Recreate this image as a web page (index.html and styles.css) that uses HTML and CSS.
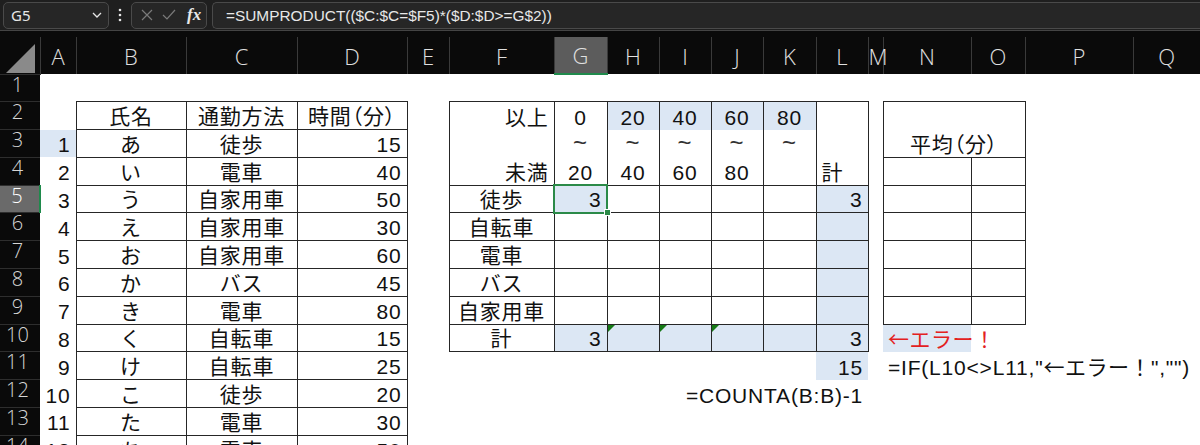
FILE: index.html
```html
<!DOCTYPE html>
<html lang="ja">
<head>
    <meta charset="UTF-8">
    <meta name="viewport" content="width=device-width, initial-scale=1.0">
    <title>通勤時間集計</title>
    <link rel="stylesheet" href="styles.css">
</head>
<body>
    <div class="formula-bar">
        <div class="name-box">
            <span>G5</span>
            <svg width="10" height="6" viewBox="0 0 10 6"><path d="M1 1l4 4 4-4" fill="none" stroke="#e6e6e6" stroke-width="1.3"/></svg>
        </div>
        <div class="bar-dots">
            <svg width="4" height="14" viewBox="0 0 4 14"><circle cx="2" cy="2" r="1.3" fill="#e6e6e6"/><circle cx="2" cy="7" r="1.3" fill="#e6e6e6"/><circle cx="2" cy="12" r="1.3" fill="#e6e6e6"/></svg>
        </div>
        <div class="bar-buttons">
            <svg width="12" height="12" viewBox="0 0 12 12"><path d="M1 1L11 11M11 1L1 11" stroke="#7a7a7a" stroke-width="1.2"/></svg>
            <svg width="14" height="12" viewBox="0 0 14 12"><path d="M1 6l4 4 8-9" fill="none" stroke="#7a7a7a" stroke-width="1.2"/></svg>
            <span class="fx">fx</span>
        </div>
        <div class="formula-input">=SUMPRODUCT(($C:$C=$F5)*($D:$D&gt;=G$2))</div>
    </div>

    <div class="sheet">
        <table class="grid">
            <colgroup>
                <col style="width:40px"><col style="width:36px"><col style="width:110px"><col style="width:111px">
                <col style="width:110px"><col style="width:42px"><col style="width:105px"><col style="width:53px">
                <col style="width:52px"><col style="width:52px"><col style="width:52px"><col style="width:53px">
                <col style="width:52px"><col style="width:15px"><col style="width:88px"><col style="width:54px">
                <col style="width:108px"><col style="width:67px">
            </colgroup>
            <thead>
                <tr>
                    <th class="corner"><svg width="30" height="30" viewBox="0 0 30 30"><polygon points="29,0 29,29 0,29" fill="#8a8a8a"/></svg></th>
                    <th>A</th><th>B</th><th>C</th><th>D</th><th>E</th><th>F</th>
                    <th class="cur">G</th><th>H</th><th>I</th><th>J</th><th>K</th><th>L</th>
                    <th>M</th><th>N</th><th>O</th><th>P</th><th>Q</th>
                </tr>
            </thead>
            <tbody>
                <tr>
                    <th class="rh">1</th>
                    <td></td><td></td><td></td><td></td><td></td><td></td><td></td><td></td><td></td>
                    <td></td><td></td><td></td><td></td><td></td><td></td><td></td><td></td>
                </tr>
                <tr>
                    <th class="rh">2</th>
                    <td></td>
                    <td class="box c">氏名</td><td class="box c">通勤方法</td><td class="box c palt">時間（分）</td>
                    <td></td>
                    <td class="box-top r">以上</td>
                    <td class="box-top c">0</td>
                    <td class="box-top c fill">20</td>
                    <td class="box-top c fill">40</td>
                    <td class="box-top c fill">60</td>
                    <td class="box-top c fill">80</td>
                    <td class="box-top"></td>
                    <td></td>
                    <td class="box c palt avg-head" colspan="2" rowspan="2">平均（分）</td>
                    <td></td><td></td>
                </tr>
                <tr>
                    <th class="rh">3</th>
                    <td class="r fill">1</td>
                    <td class="box c">あ</td><td class="box c">徒歩</td><td class="box r">15</td>
                    <td></td>
                    <td class="box-mid"></td>
                    <td class="box-mid c tilde">~</td><td class="box-mid c tilde">~</td><td class="box-mid c tilde">~</td>
                    <td class="box-mid c tilde">~</td><td class="box-mid c tilde">~</td>
                    <td class="box-mid"></td>
                    <td></td>
                    <td></td><td></td>
                </tr>
                <tr>
                    <th class="rh">4</th>
                    <td class="r">2</td>
                    <td class="box c">い</td><td class="box c">電車</td><td class="box r">40</td>
                    <td></td>
                    <td class="box-bot r">未満</td>
                    <td class="box-bot c">20</td><td class="box-bot c">40</td><td class="box-bot c">60</td>
                    <td class="box-bot c">80</td><td class="box-bot"></td>
                    <td class="box-bot l">計</td>
                    <td></td>
                    <td class="box"></td><td class="box"></td>
                    <td></td><td></td>
                </tr>
                <tr>
                    <th class="rh cur">5</th>
                    <td class="r">3</td>
                    <td class="box c">う</td><td class="box c">自家用車</td><td class="box r">50</td>
                    <td></td>
                    <td class="box c">徒歩</td>
                    <td class="box r fill active">3</td>
                    <td class="box"></td><td class="box"></td><td class="box"></td><td class="box"></td>
                    <td class="box r fill">3</td>
                    <td></td>
                    <td class="box"></td><td class="box"></td>
                    <td></td><td></td>
                </tr>
                <tr>
                    <th class="rh">6</th>
                    <td class="r">4</td>
                    <td class="box c">え</td><td class="box c">自家用車</td><td class="box r">30</td>
                    <td></td>
                    <td class="box c">自転車</td>
                    <td class="box"></td><td class="box"></td><td class="box"></td><td class="box"></td><td class="box"></td>
                    <td class="box fill"></td>
                    <td></td>
                    <td class="box"></td><td class="box"></td>
                    <td></td><td></td>
                </tr>
                <tr>
                    <th class="rh">7</th>
                    <td class="r">5</td>
                    <td class="box c">お</td><td class="box c">自家用車</td><td class="box r">60</td>
                    <td></td>
                    <td class="box c">電車</td>
                    <td class="box"></td><td class="box"></td><td class="box"></td><td class="box"></td><td class="box"></td>
                    <td class="box fill"></td>
                    <td></td>
                    <td class="box"></td><td class="box"></td>
                    <td></td><td></td>
                </tr>
                <tr>
                    <th class="rh">8</th>
                    <td class="r">6</td>
                    <td class="box c">か</td><td class="box c">バス</td><td class="box r">45</td>
                    <td></td>
                    <td class="box c">バス</td>
                    <td class="box"></td><td class="box"></td><td class="box"></td><td class="box"></td><td class="box"></td>
                    <td class="box fill"></td>
                    <td></td>
                    <td class="box"></td><td class="box"></td>
                    <td></td><td></td>
                </tr>
                <tr>
                    <th class="rh">9</th>
                    <td class="r">7</td>
                    <td class="box c">き</td><td class="box c">電車</td><td class="box r">80</td>
                    <td></td>
                    <td class="box c">自家用車</td>
                    <td class="box"></td><td class="box"></td><td class="box"></td><td class="box"></td><td class="box"></td>
                    <td class="box fill"></td>
                    <td></td>
                    <td class="box"></td><td class="box"></td>
                    <td></td><td></td>
                </tr>
                <tr>
                    <th class="rh">10</th>
                    <td class="r">8</td>
                    <td class="box c">く</td><td class="box c">自転車</td><td class="box r">15</td>
                    <td></td>
                    <td class="box c">計</td>
                    <td class="box r fill">3</td>
                    <td class="box fill flag"></td><td class="box fill flag"></td><td class="box fill flag"></td>
                    <td class="box fill"></td>
                    <td class="box r fill">3</td>
                    <td></td>
                    <td class="l fill err"><span class="jp">←エラー！</span></td>
                    <td></td><td></td><td></td>
                </tr>
                <tr>
                    <th class="rh">11</th>
                    <td class="r">9</td>
                    <td class="box c">け</td><td class="box c">自転車</td><td class="box r">25</td>
                    <td></td><td></td><td></td><td></td><td></td><td></td><td></td>
                    <td class="r fill">15</td>
                    <td></td>
                    <td class="l">=IF(L10&lt;&gt;L11,"<span class="jp">←エラー！</span>","")</td>
                    <td></td><td></td><td></td>
                </tr>
                <tr>
                    <th class="rh">12</th>
                    <td class="r">10</td>
                    <td class="box c">こ</td><td class="box c">徒歩</td><td class="box r">20</td>
                    <td></td><td></td><td></td><td></td>
                    <td class="r" colspan="4">=COUNTA(B:B)-1</td>
                    <td></td><td></td><td></td><td></td><td></td>
                </tr>
                <tr>
                    <th class="rh">13</th>
                    <td class="r">11</td>
                    <td class="box c">た</td><td class="box c">電車</td><td class="box r">30</td>
                    <td></td><td></td><td></td><td></td><td></td><td></td><td></td><td></td>
                    <td></td><td></td><td></td><td></td><td></td>
                </tr>
                <tr>
                    <th class="rh">14</th>
                    <td class="r">12</td>
                    <td class="box c">ち</td><td class="box c">電車</td><td class="box r">50</td>
                    <td></td><td></td><td></td><td></td><td></td><td></td><td></td><td></td>
                    <td></td><td></td><td></td><td></td><td></td>
                </tr>
            </tbody>
        </table>
    </div>
</body>
</html>
```

FILE: styles.css
```css
body {
    margin: 0;
    background: #0a0a0a;
    font-family: "Liberation Sans", "Noto Sans CJK JP", sans-serif;
    overflow: hidden;
}

/* formula bar */
.formula-bar {
    display: flex;
    align-items: center;
    height: 30px;
    padding-left: 3px;
    background: #1f1f1f;
    border-bottom: 1px solid #444;
}
.name-box {
    box-sizing: border-box;
    width: 106px;
    height: 27px;
    display: flex;
    align-items: center;
    justify-content: space-between;
    padding: 0 6px 0 7px;
    background: #262626;
    border: 1px solid #4a4a4a;
    border-radius: 5px;
    color: #e8e8e8;
    font-family: "Noto Sans", sans-serif;
    font-size: 15px;
}
.bar-dots {
    width: 22px;
    display: flex;
    justify-content: center;
}
.bar-buttons {
    box-sizing: border-box;
    width: 76px;
    height: 27px;
    display: flex;
    align-items: center;
    gap: 9px;
    padding-left: 9px;
    background: #262626;
    border: 1px solid #4a4a4a;
    border-radius: 5px;
}
.bar-buttons .fx {
    margin-left: 2px;
    color: #e8e8e8;
    font-family: "Liberation Serif", serif;
    font-style: italic;
    font-weight: bold;
    font-size: 17px;
}
.formula-input {
    box-sizing: border-box;
    flex: 1;
    height: 27px;
    margin-left: 5px;
    padding-left: 13px;
    line-height: 25px;
    background: #262626;
    border: 1px solid #4a4a4a;
    border-right: none;
    border-radius: 5px 0 0 5px;
    color: #e8e8e8;
    font-family: "Liberation Sans", sans-serif;
    font-size: 15.4px;
    white-space: nowrap;
}

/* sheet grid */
.sheet {
    padding-top: 6px;
    background: #0a0a0a;
}
.grid {
    width: 1200px;
    table-layout: fixed;
    border-collapse: collapse;
}
.grid thead th {
    height: 36px;
    padding: 0;
    border-left: 1px solid #3a3a3a;
    color: #e0e0e0;
    font-family: "Open Sans", "Liberation Sans", sans-serif;
    font-weight: 300;
    font-size: 22px;
    line-height: 36px;
}
.grid thead th.corner {
    border-left: none;
    text-align: right;
    vertical-align: bottom;
    padding-right: 4px;
    line-height: 0;
}
.grid thead th.cur {
    background: #5c5c5c;
    border-bottom: 2px solid #1f8a4c;
}
.grid tr {
    height: 27.8px;
}
.grid th.rh {
    padding: 0 5px 0 0;
    background: #0a0a0a;
    border-top: 1px solid #2e2e2e;
    color: #d6d6d6;
    font-family: "Open Sans", "Liberation Sans", sans-serif;
    font-weight: 300;
    font-size: 20px;
    line-height: 20px;
    text-align: center;
    vertical-align: top;
}
.grid th.rh.cur {
    background: #6a6a6a;
    color: #fff;
    border-right: 2px solid #1f8a4c;
}
.grid td {
    padding: 0 5px;
    background: #fff;
    color: #111;
    font-size: 21px;
    letter-spacing: 0.8px;
    line-height: 24px;
    white-space: nowrap;
    vertical-align: bottom;
}
.grid .jp {
    font-family: "Noto Sans CJK JP", sans-serif;
    letter-spacing: 0.5px;
}

/* alignment */
.grid td.c { text-align: center; }
.grid td.r { text-align: right; }
.grid td.l { text-align: left; }
.grid td.palt { font-feature-settings: "palt"; }

/* borders */
.grid td.box {
    border: 1px solid #262626;
}
.grid td.box-top {
    border: 1px solid #262626;
    border-bottom: none;
}
.grid td.box-mid {
    border-left: 1px solid #262626;
    border-right: 1px solid #262626;
}
.grid td.box-bot {
    border: 1px solid #262626;
    border-top: none;
}

.grid td.fill {
    background: #dce7f4;
}
.grid td.tilde {
    font-size: 24px;
    line-height: 24px;
    padding-bottom: 2px;
    color: #333;
}
.grid td.avg-head {
    vertical-align: bottom;
}
.grid td.err {
    color: #e3211f;
}

/* active cell with fill handle */
.grid td.active {
    position: relative;
    outline: 2px solid #2b8a48;
    outline-offset: -1px;
}
.grid td.active::after {
    content: "";
    position: absolute;
    right: -4px;
    bottom: -4px;
    width: 5px;
    height: 5px;
    background: #2b8a48;
    border: 1px solid #fff;
}

/* error indicator in the corner */
.grid td.flag {
    position: relative;
}
.grid td.flag::before {
    content: "";
    position: absolute;
    top: 0;
    left: 0;
    border-top: 7px solid #167a16;
    border-right: 7px solid transparent;
}
```
